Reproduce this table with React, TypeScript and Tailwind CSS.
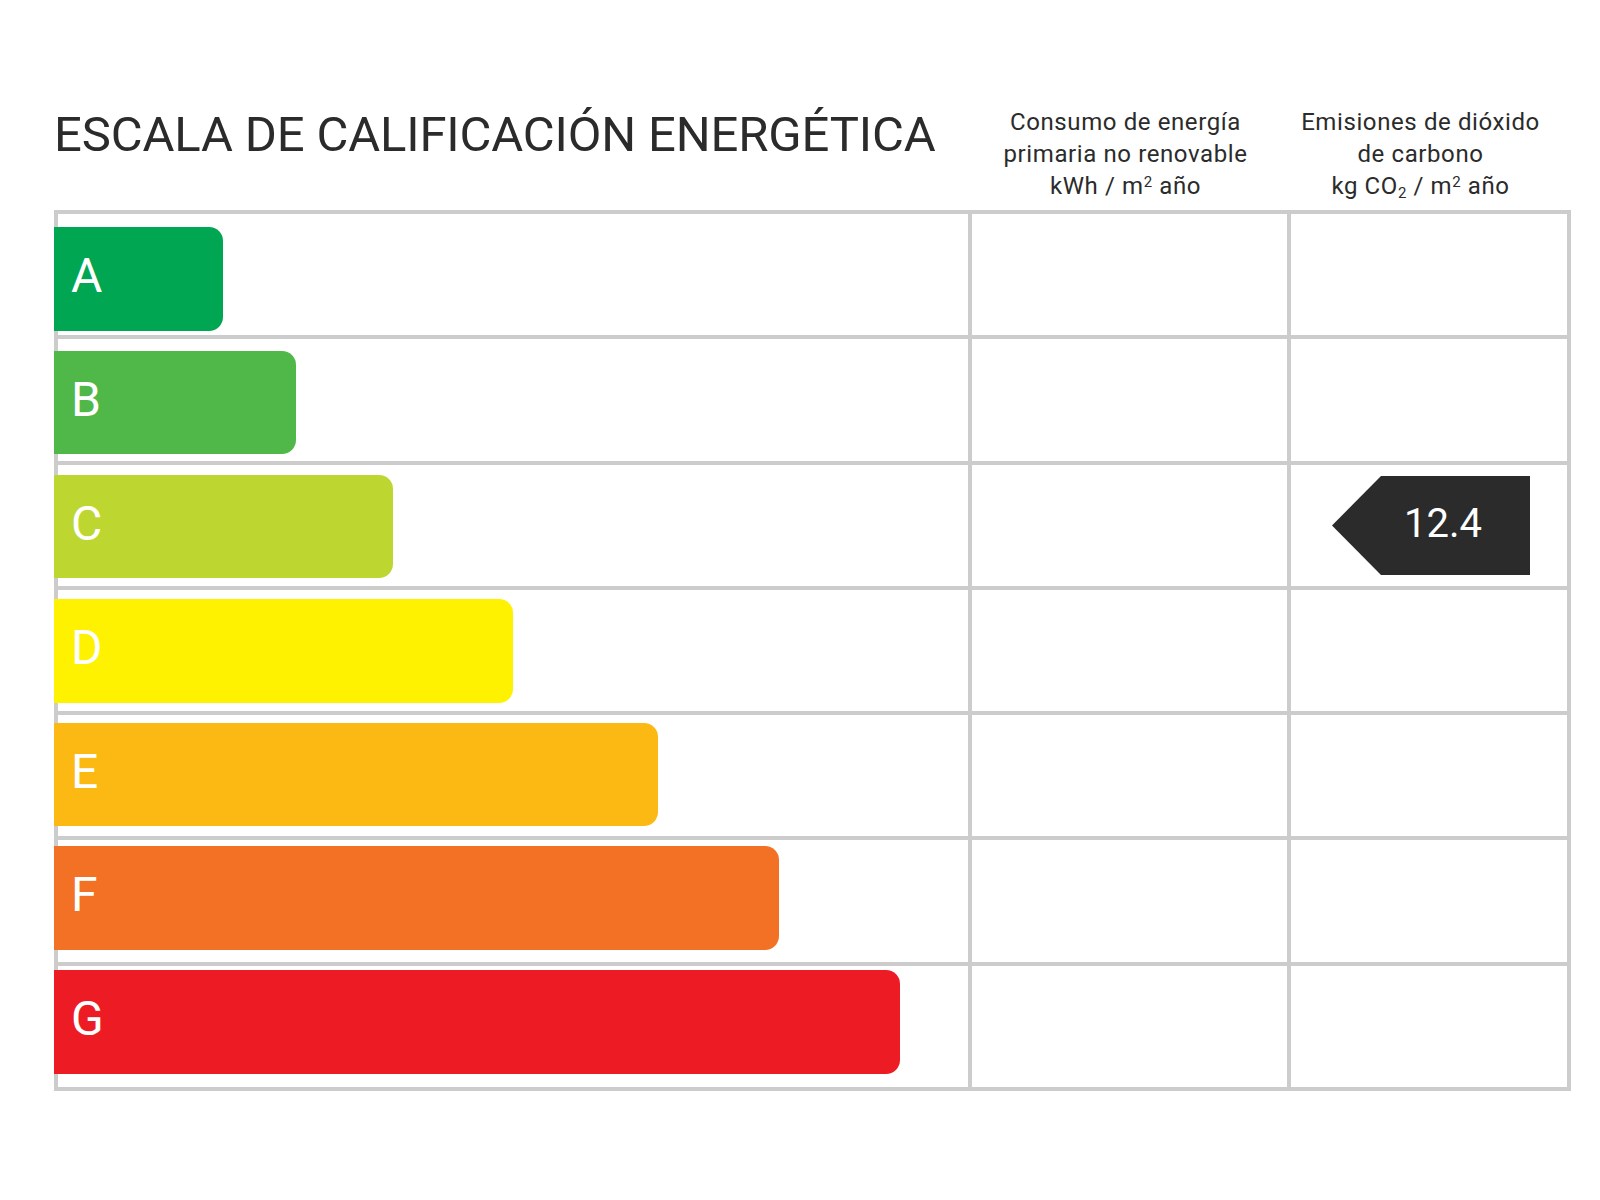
import React from 'react'

type Band = { letter: string; width: string; top: string; color: string; value?: string }

const bands: Band[] = [
  { letter: 'A', width: 'w-[169px]', top: 'mt-[13px]', color: 'bg-[#00a651]' },
  { letter: 'B', width: 'w-[242px]', top: 'mt-[11.7px]', color: 'bg-[#4fb848]' },
  { letter: 'C', width: 'w-[339px]', top: 'mt-[10.4px]', color: 'bg-[#bed730]', value: '12.4' },
  { letter: 'D', width: 'w-[459px]', top: 'mt-[9.2px]', color: 'bg-[#fff200]' },
  { letter: 'E', width: 'w-[604px]', top: 'mt-[7.6px]', color: 'bg-[#fdb913]' },
  { letter: 'F', width: 'w-[725px]', top: 'mt-[5.6px]', color: 'bg-[#f37124]' },
  { letter: 'G', width: 'w-[846px]', top: 'mt-[4.3px]', color: 'bg-[#ed1c24]' },
]

function ValueTag({ value }: { value: string }) {
  return (
    <div className="flex h-[99px] items-stretch">
      <svg width="49" height="99" viewBox="0 0 49 99" className="block">
        <polygon points="49,0 0,49.5 49,99" fill="#2b2b2b" />
      </svg>
      <div className="flex w-[149px] items-center bg-[#2b2b2b] pb-[2px] pl-[23px] text-[40px] leading-none text-white">
        {value}
      </div>
    </div>
  )
}

export default function App() {
  return (
    <div className="h-[1200px] w-[1600px] bg-white font-['Roboto','Liberation_Sans',sans-serif] text-[#2b2b2b]">
      <div className="flex h-[210px] pl-[54px]">
        <div className="w-[916px] pt-[110px] text-[49px] leading-none tracking-[-0.15px]">
          ESCALA DE CALIFICACIÓN ENERGÉTICA
        </div>
        <div className="w-[319px] pt-[106px] pr-[8px] text-center text-[24px] leading-[32px] tracking-[0.6px]">
          Consumo de energía
          <br />
          primaria no renovable
          <br />
          kWh / m<sup className="text-[15px]">2</sup> año
        </div>
        <div className="flex-1 pt-[106px] pr-[48px] text-center text-[24px] leading-[32px] tracking-[0.6px]">
          Emisiones de dióxido
          <br />
          de carbono
          <br />
          kg CO<sub className="text-[15px]">2</sub> / m<sup className="text-[15px]">2</sup> año
        </div>
      </div>

      <div className="ml-[54px] w-[1517px] border-4 border-[#cccccc]">
        {bands.map((band, i) => (
          <div
            key={band.letter}
            className={i === 0 ? 'flex h-[121.3px]' : 'flex h-[125.3px] border-t-4 border-[#cccccc]'}
          >
            <div className="w-[914px] border-r-4 border-[#cccccc]">
              <div
                className={`-ml-[4px] ${band.top} ${band.width} ${band.color} flex h-[103.5px] items-center rounded-r-[14px] pb-[6px] pl-[17px] text-[48px] leading-none text-white`}
              >
                {band.letter}
              </div>
            </div>
            <div className="w-[319px] border-r-4 border-[#cccccc]" />
            <div className="flex flex-1 items-center justify-end pr-[37px]">
              {band.value && <ValueTag value={band.value} />}
            </div>
          </div>
        ))}
      </div>
    </div>
  )
}
